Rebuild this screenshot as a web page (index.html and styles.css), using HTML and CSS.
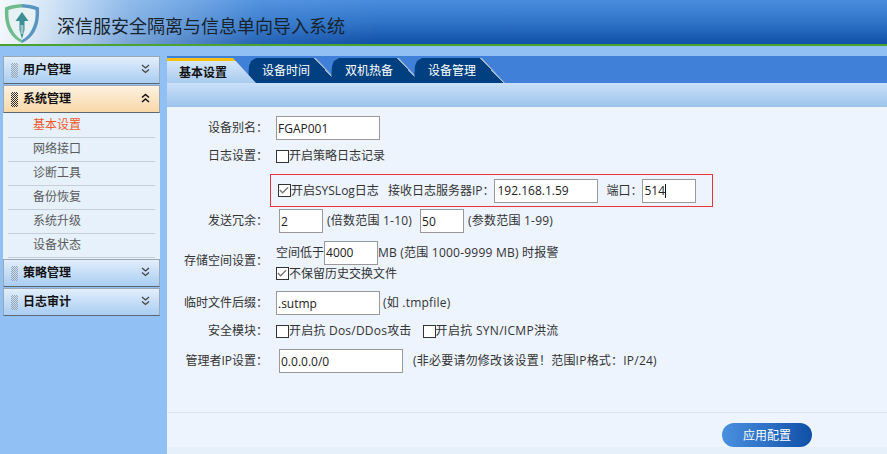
FILE: index.html
```html
<!DOCTYPE html>
<html lang="zh-CN">
<head>
<meta charset="utf-8">
<title>深信服安全隔离与信息单向导入系统</title>
<link rel="stylesheet" href="styles.css">
</head>
<body>
<header class="top">
  <svg class="logo" width="36" height="40" viewBox="0 0 36 40">
    <path d="M18 1C12 1.500 6.500 2 1 4.500C.5 14 1.500 22 5.500 29C8.500 34 13 37.500 18 40C23 37.500 27.500 34 30.500 29C34.500 22 35.500 14 35 4.500C29.500 2 24 1.500 18 1Z" fill="#e6f1f3"/>
    <path d="M18 1C12 1.500 6.500 2 1 4.500C.5 14 1.500 22 5.500 29C8.500 34 13 37.500 18 40L18 37C13.500 34.500 10.500 31 8.500 27C5 21 4 14 4.500 7C9 5.500 13 4.800 18 4.500Z" fill="#6fbb8c"/>
    <path d="M18 1C24 1.500 29.500 2 35 4.500C35.500 14 34.500 22 30.500 29C27.500 34 23 37.500 18 40L18 37C22.500 34.500 25.500 31 27.500 27C31 21 32 14 31.500 7C27 5.500 23 4.800 18 4.500Z" fill="#5a94c2"/>
    <path d="M18 9L24.500 18H20.500V27L18 36L15.500 27V18H11.500Z" fill="#3c8f96"/>
    <path d="M17.200 22V31M18.800 22V31" stroke="#e6f1f3" stroke-width=".8" fill="none"/>
  </svg>
  <h1 class="brand">深信服安全隔离与信息单向导入系统</h1>
</header>
<div class="layout">
  <nav class="side">
    <div class="acc">
      <span class="grip"></span><span class="acc-t">用户管理</span>
      <svg class="chev" width="9" height="10" viewBox="0 0 9 10"><path d="M1 1L4.500 4L8 1M1 5.500L4.500 8.500L8 5.500" fill="none" stroke="#444" stroke-width="1.300"/></svg>
    </div>
    <div class="acc acc-on">
      <span class="grip"></span><span class="acc-t">系统管理</span>
      <svg class="chev" width="9" height="10" viewBox="0 0 9 10"><path d="M1 4.500L4.500 1.500L8 4.500M1 9L4.500 6L8 9" fill="none" stroke="#111" stroke-width="1.500"/></svg>
    </div>
    <ul class="sub">
      <li class="sub-on">基本设置</li>
      <li>网络接口</li>
      <li>诊断工具</li>
      <li>备份恢复</li>
      <li>系统升级</li>
      <li>设备状态</li>
    </ul>
    <div class="acc">
      <span class="grip"></span><span class="acc-t">策略管理</span>
      <svg class="chev" width="9" height="10" viewBox="0 0 9 10"><path d="M1 1L4.500 4L8 1M1 5.500L4.500 8.500L8 5.500" fill="none" stroke="#444" stroke-width="1.300"/></svg>
    </div>
    <div class="acc">
      <span class="grip"></span><span class="acc-t">日志审计</span>
      <svg class="chev" width="9" height="10" viewBox="0 0 9 10"><path d="M1 1L4.500 4L8 1M1 5.500L4.500 8.500L8 5.500" fill="none" stroke="#444" stroke-width="1.300"/></svg>
    </div>
  </nav>
  <main class="main">
    <div class="tabs">
      <div class="tab tab-on">基本设置</div>
      <div class="tab">设备时间</div>
      <div class="tab">双机热备</div>
      <div class="tab">设备管理</div>
    </div>
    <div class="band"></div>
    <form class="form">
      <div class="row r1">
        <label class="lab">设备别名：</label>
        <div class="ctl"><input class="field w104" value="FGAP001"></div>
      </div>
      <div class="row r2">
        <label class="lab">日志设置：</label>
        <div class="ctl"><span class="cb"></span><span>开启策略日志记录</span></div>
      </div>
      <div class="row r3">
        <span class="lab"></span>
        <div class="ctl redbox">
          <span class="cb"><svg width="13" height="13" viewBox="0 0 13 13"><path d="M2 6L5 9L11 3" fill="none" stroke="#777" stroke-width="1.400"/></svg></span>
          <span>开启SYSLog日志</span>
          <span class="t-ip">接收日志服务器IP：</span>
          <input class="field ip" value="192.168.1.59">
          <span class="t-port">端口：</span>
          <span class="caret-wrap"><input class="field port" value="514"><i class="caret"></i></span>
        </div>
      </div>
      <div class="row r4">
        <label class="lab">发送冗余：</label>
        <div class="ctl ind3">
          <input class="field w44" value="2">
          <span class="hint-a wide">(倍数范围 1-10)</span>
          <input class="field w44" value="50">
          <span class="hint-a wide">(参数范围 1-99)</span>
        </div>
      </div>
      <div class="row r5">
        <label class="lab">存储空间设置：</label>
        <div class="stack">
          <div class="ctl"><span>空间低于</span><input class="field w54" value="4000"><span class="wide">MB (范围 1000-9999 MB) 时报警</span></div>
          <div class="ctl"><span class="cb"><svg width="13" height="13" viewBox="0 0 13 13"><path d="M2 6L5 9L11 3" fill="none" stroke="#777" stroke-width="1.400"/></svg></span><span>不保留历史交换文件</span></div>
        </div>
      </div>
      <div class="row r6">
        <label class="lab">临时文件后缀：</label>
        <div class="ctl"><input class="field w104" value=".sutmp"><span class="hint-b wide">(如 .tmpfile)</span></div>
      </div>
      <div class="row r7">
        <label class="lab">安全模块：</label>
        <div class="ctl"><span class="cb"></span><span class="wide">开启抗 Dos/DDos攻击</span><span class="cb cb-gap"></span><span class="wider">开启抗 SYN/ICMP洪流</span></div>
      </div>
      <div class="row r8">
        <label class="lab">管理者IP设置：</label>
        <div class="ctl ind3"><input class="field w124" value="0.0.0.0/0"><span class="hint-c wide">(非必要请勿修改该设置！范围IP格式：IP/24)</span></div>
      </div>
    </form>
    <footer class="foot">
      <button type="button" class="apply">应用配置</button>
    </footer>
  </main>
</div>
</body>
</html>
```
FILE: styles.css
```css
* { box-sizing: border-box; }
html, body { margin: 0; padding: 0; }
body {
  width: 887px;
  height: 454px;
  overflow: hidden;
  background: #90c0f4;
  font: 12px/16px "Open Sans", "Noto Sans CJK SC", sans-serif;
  color: #333;
  display: flex;
  flex-direction: column;
}
.top {
  height: 46px;
  flex: none;
  display: flex;
  align-items: flex-start;
  border-bottom: 2px solid #4aa32e;
  background:
    linear-gradient(90deg, rgba(255,255,255,.95) 0, rgba(235,245,252,.85) 50px, rgba(190,218,245,.6) 130px, rgba(120,170,230,.2) 260px, rgba(74,140,220,0) 380px),
    linear-gradient(180deg, #4a8ddd 0, #2f74c8 50%, #1050a8 100%);
}
.logo { margin: 3px 0 0 4px; flex: none; }
.brand {
  margin: 14px 0 0 17px;
  font: 400 18px/22px "Noto Sans CJK SC", sans-serif;
  color: #16242f;
  white-space: nowrap;
}
.layout { flex: 1; display: flex; min-height: 0; }
.side { width: 167px; flex: none; padding: 10px 7px 0 3px; }
.acc {
  height: 28px;
  margin-bottom: 1px;
  display: flex;
  align-items: center;
  padding: 0 9px 0 7px;
  border: 1px solid #9aa7b5;
  border-bottom: 1px solid #5c6670;
  background: linear-gradient(180deg, #e2eefc 0, #a9cdf2 100%);
  color: #111;
}
.acc-on { background: linear-gradient(180deg, #fdf1df 0, #f8d8a8 100%); }
.grip {
  width: 7px;
  height: 15px;
  flex: none;
  background: repeating-conic-gradient(#9aa6b2 0 25%, transparent 0 50%) 0 0 / 2px 2px;
}
.acc-on .grip { background: repeating-conic-gradient(#333 0 25%, transparent 0 50%) 0 0 / 2px 2px; }
.acc-t { margin-left: 5px; font-weight: 700; flex: 1; }
.chev { flex: none; margin-top: -3px; }
.sub {
  margin: -1px 0 0;
  padding: 1px 5px 0;
  list-style: none;
  background: #e6f1fc;
  height: 146px;
}
.sub li {
  height: 24px;
  line-height: 22px;
  padding-left: 25px;
  border-bottom: 1px solid #c6ced6;
  color: #5a5a5a;
}
.sub li.sub-on { color: #f05a28; }
.main { flex: 1; display: flex; flex-direction: column; min-width: 0; background: #edf4fd; }
.tabs {
  height: 37px;
  flex: none;
  padding-top: 12px;
  display: flex;
  background: linear-gradient(180deg, #90c0f4 0 10px, #4080d8 10px);
}
.tab {
  width: 91px;
  height: 25px;
  margin-right: -8px;
  padding-left: 14px;
  line-height: 26px;
  color: #fff;
  clip-path: polygon(0 100%, 1px 8px, 3px 3px, 8px 0, 68px 0, 91px 100%);
  background: linear-gradient(47.4deg, #004080 0 65.500px, #9fb6cc 65.500px);
}
.tab-on {
  width: 89px;
  padding-left: 12px;
  color: #111;
  font-weight: 600;
  z-index: 1;
  clip-path: polygon(0 0, 66px 0, 89px 100%, 0 100%);
  border-top: 3px solid #f7c014;
  line-height: 24px;
  background: linear-gradient(180deg, #d5e6f8 0, #a8cbf0 100%);
}
.band {
  height: 24px;
  flex: none;
  background: linear-gradient(180deg, #c9e0f8 0, #9dc4ec 100%);
}
.form { flex: 1; padding-top: 9px; color: #333; }
.row { display: grid; grid-template-columns: 101px 1fr; column-gap: 8px; align-items: center; }
.lab { text-align: right; white-space: nowrap; }
.ctl { display: flex; align-items: center; white-space: nowrap; }
.stack { display: flex; flex-direction: column; }
.r1 { height: 24px; }
.r2 { height: 16px; margin-top: 8px; }
.r3 { height: 33px; margin-top: 10px; }
.r4 { height: 24px; margin-top: 2px; }
.r5 { height: 42px; margin-top: 7px; }
.r5 .stack { gap: 1px; }
.r6 { height: 24px; margin-top: 9px; }
.r7 { height: 16px; margin-top: 8px; }
.r8 { height: 24px; margin-top: 10px; }
.ind3 { padding-left: 3px; }
.wide { letter-spacing: .22px; }
.wider { letter-spacing: .3px; }
.field {
  height: 24px;
  padding: 0 1px 0 1px;
  border: 1px solid #999;
  border-radius: 0;
  background: #fff;
  color: #222;
  font: 12px "Open Sans", sans-serif;
  outline: none;
}
.w104 { width: 104px; }
.w44 { width: 44px; }
.w54 { width: 54px; }
.w124 { width: 124px; }
.cb {
  width: 13px;
  height: 13px;
  flex: none;
  border: 1px solid #333;
  background: #fff;
  display: inline-flex;
}
.cb svg { display: block; margin: -1px 0 0 -1px; }
.cb-gap { margin-left: 11px; }
.redbox {
  width: 443px;
  height: 33px;
  margin-left: -6px;
  padding-left: 7px;
  border: 1px solid #e8333a;
}
.t-ip { margin-left: 9px; }
.ip { width: 104px; padding-left: 2px; }
.t-port { margin-left: 8px; }
.port { width: 54px; }
.caret-wrap { position: relative; display: inline-flex; }
.caret { position: absolute; left: 23px; top: 5px; width: 1px; height: 14px; background: #111; }
.hint-a { margin: 0 8px 0 4px; }
.hint-a:last-child { margin-right: 0; }
.hint-b { margin-left: 3px; }
.hint-c { margin-left: 10px; }
.foot {
  height: 42px;
  flex: none;
  border-top: 1px solid #dfe5ec;
  padding: 10px 75px 0 0;
  display: flex;
  justify-content: flex-end;
  align-items: flex-start;
  background: linear-gradient(180deg, #edf4fd 0 34px, #e6f0fb 34px);
}
.apply {
  width: 90px;
  height: 24px;
  padding: 0;
  border: 0;
  border-radius: 12px;
  background: linear-gradient(90deg, #4a90e0 0, #1050a8 100%);
  color: #fff;
  font: 12px/24px "Noto Sans CJK SC", sans-serif;
}
```
